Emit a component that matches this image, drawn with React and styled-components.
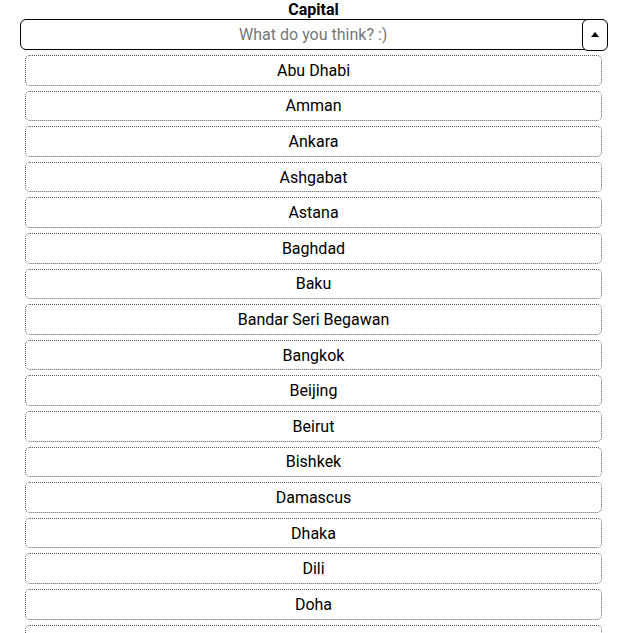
import React from 'react';
import styled, { createGlobalStyle } from 'styled-components';

const GlobalStyle = createGlobalStyle`
  body {
    margin: 0;
    font-family: Roboto, "Liberation Sans", sans-serif;
    background: #ffffff;
    color: #000000;
  }
`;

const Wrapper = styled.div`
  display: flex;
  flex-direction: column;
  align-items: stretch;
  padding: 0 19px 0 20px;
`;

const Label = styled.label`
  text-align: center;
  font-weight: 700;
  font-size: 16px;
  line-height: 19px;
`;

const Field = styled.div`
  display: flex;
  align-items: stretch;
  height: 31px;
  box-sizing: border-box;
  border: 1.5px solid #000;
  border-radius: 6px;
`;

const Input = styled.input`
  flex: 1;
  min-width: 0;
  border: none;
  outline: none;
  background: transparent;
  text-align: center;
  font-family: Roboto, "Liberation Sans", sans-serif;
  font-size: 16px;
  color: #000;
  padding: 0 0 0 24px;

  &::placeholder {
    color: #777;
  }
`;

const Toggle = styled.button`
  width: 26px;
  margin: -1.5px -1.5px -1.5px 0;
  border: 1.5px solid #000;
  border-radius: 6px;
  background: #fff;
  display: flex;
  align-items: center;
  justify-content: center;
  padding: 0;
  cursor: pointer;
`;

const List = styled.ul`
  list-style: none;
  margin: 5px 5px 0;
  padding: 0;
  display: flex;
  flex-direction: column;
  gap: 5px;
`;

const Option = styled.li`
  height: 30.6px;
  box-sizing: border-box;
  border: 1px dotted #555;
  border-radius: 5px;
  display: flex;
  align-items: center;
  justify-content: center;
  font-size: 16px;
`;

const capitals = [
  'Abu Dhabi', 'Amman', 'Ankara', 'Ashgabat', 'Astana', 'Baghdad', 'Baku',
  'Bandar Seri Begawan', 'Bangkok', 'Beijing', 'Beirut', 'Bishkek',
  'Damascus', 'Dhaka', 'Dili', 'Doha', 'Dubai', 'Dushanbe'
];

export default function App() {
  return (
    <>
      <GlobalStyle />
      <Wrapper>
        <Label htmlFor="capital">Capital</Label>
        <Field>
          <Input id="capital" placeholder="What do you think? :)" />
          <Toggle aria-label="toggle">
            <svg width="8" height="5" viewBox="0 0 8 5">
              <path d="M0 5 L4 0 L8 5 Z" fill="#000" />
            </svg>
          </Toggle>
        </Field>
        <List>
          {capitals.map((c) => (
            <Option key={c}>{c}</Option>
          ))}
        </List>
      </Wrapper>
    </>
  );
}
